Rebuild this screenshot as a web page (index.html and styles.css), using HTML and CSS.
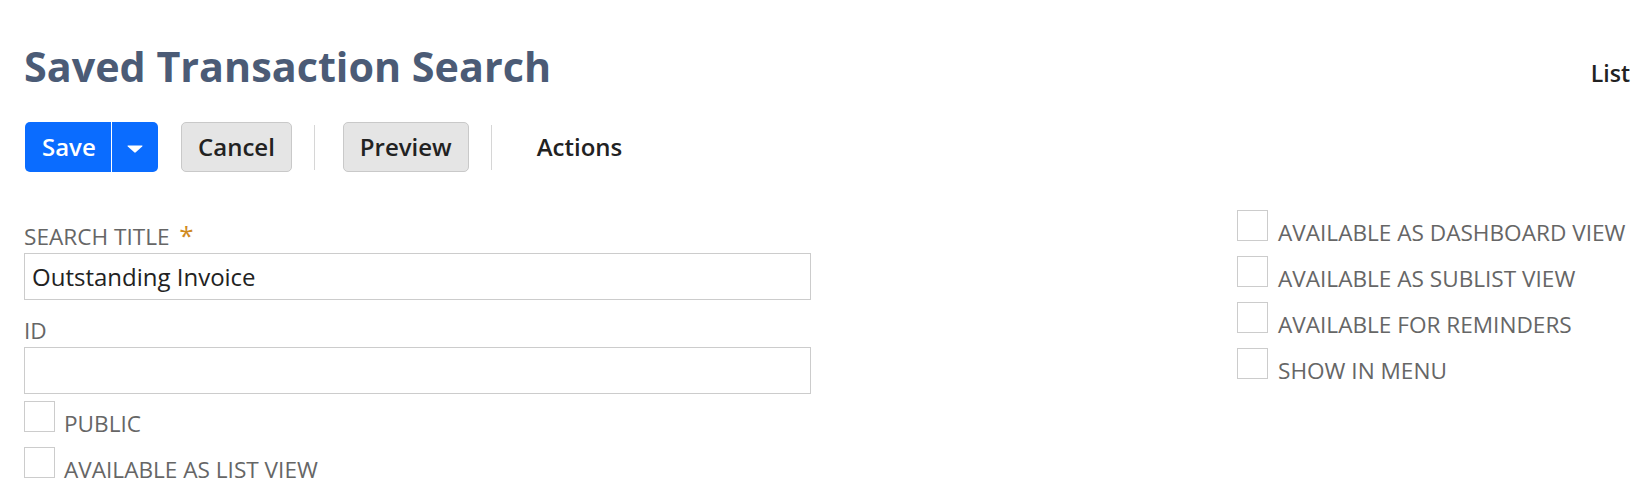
FILE: index.html
```html
<!DOCTYPE html>
<html lang="en">
<head>
<meta charset="utf-8">
<title>Saved Transaction Search</title>
<link rel="stylesheet" href="styles.css">
</head>
<body>
<div class="page">
  <header class="header">
    <h1 class="title">Saved Transaction Search</h1>
    <a class="list-link">List</a>
  </header>

  <div class="toolbar">
    <div class="split-btn">
      <button class="btn-primary">Save</button>
      <button class="btn-primary-menu" aria-label="More save options">
        <svg width="16" height="8" viewBox="0 0 16 8"><path d="M1 0.5 H15 Q16 0.5 15.2 1.4 L8.8 7.3 Q8 8 7.2 7.3 L0.8 1.4 Q0 0.5 1 0.5 Z" fill="#fff"/></svg>
      </button>
    </div>
    <button class="btn">Cancel</button>
    <span class="sep"></span>
    <button class="btn">Preview</button>
    <span class="sep"></span>
    <button class="btn-plain">Actions</button>
  </div>

  <div class="form">
    <div class="col-left">
      <label class="field-label">SEARCH TITLE <span class="req">*</span></label>
      <div class="input">Outstanding Invoice</div>
      <label class="field-label field-gap">ID</label>
      <div class="input"></div>
      <div class="checks checks-left">
        <div class="check"><span class="box"></span><span class="check-text">PUBLIC</span></div>
        <div class="check"><span class="box"></span><span class="check-text">AVAILABLE AS LIST VIEW</span></div>
      </div>
    </div>
    <div class="col-right">
      <div class="check"><span class="box"></span><span class="check-text">AVAILABLE AS DASHBOARD VIEW</span></div>
      <div class="check"><span class="box"></span><span class="check-text">AVAILABLE AS SUBLIST VIEW</span></div>
      <div class="check"><span class="box"></span><span class="check-text">AVAILABLE FOR REMINDERS</span></div>
      <div class="check"><span class="box"></span><span class="check-text">SHOW IN MENU</span></div>
    </div>
  </div>
</div>
</body>
</html>
```

FILE: styles.css
```css
html, body {
  margin: 0;
  padding: 0;
  background: #ffffff;
}

body {
  font-family: "Open Sans", "Liberation Sans", sans-serif;
  color: #222;
}

.page {
  padding: 38px 22px 0 24px;
}

.header {
  display: flex;
  align-items: baseline;
  justify-content: space-between;
  height: 56px;
}

.title {
  margin: 0;
  font-size: 41.3px;
  line-height: 56px;
  font-weight: 700;
  color: #4b5b76;
}

.list-link {
  font-size: 23px;
  font-weight: 600;
  color: #222;
}

.toolbar {
  display: flex;
  align-items: center;
  margin-top: 28px;
  margin-left: 1px;
  height: 50px;
}

.split-btn {
  display: flex;
  height: 50px;
  background: #0a6cff;
  border-radius: 5px;
  margin-right: 23px;
}

.btn-primary,
.btn-primary-menu,
.btn,
.btn-plain {
  font-family: "Open Sans", "Liberation Sans", sans-serif;
  font-size: 24px;
  font-weight: 600;
  line-height: 1;
  border: none;
  background: none;
  padding: 0;
  cursor: pointer;
}

.btn-primary {
  color: #fff;
  padding: 0 17px;
  width: 87px;
  border-right: 1px solid #fff;
}

.btn-primary-menu {
  width: 46px;
  display: flex;
  align-items: center;
  justify-content: center;
  padding-top: 3px;
}

.btn {
  height: 50px;
  padding: 0 16px;
  background: #e5e5e5;
  border: 1px solid #c9c9c9;
  border-radius: 5px;
  color: #222;
}

.btn-plain {
  height: 50px;
  padding: 0 17px;
  color: #222;
}

.sep {
  width: 1px;
  height: 45px;
  background: #d6d6d6;
  margin: 0 28px 0 22px;
}

.form {
  display: grid;
  grid-template-columns: 787px 1fr;
  column-gap: 426px;
  margin-top: 38px;
}

.col-left {
  padding-top: 13px;
}

.field-label {
  display: block;
  height: 26px;
  font-size: 22.6px;
  line-height: 28px;
  color: #666;
  margin-bottom: 4px;
  white-space: nowrap;
}

.field-gap {
  margin-top: 17px;
}

.req {
  color: #d08a1f;
  font-size: 26px;
  line-height: 0;
  margin-left: 4px;
}

.input {
  box-sizing: border-box;
  height: 47px;
  border: 1px solid #cccccc;
  padding: 0 7px;
  font-size: 24px;
  line-height: 46px;
  color: #222;
  overflow: hidden;
}

.checks-left {
  margin-top: 7px;
}

.check {
  display: flex;
  align-items: baseline;
  height: 31px;
  margin-bottom: 15px;
  white-space: nowrap;
}

.box {
  display: inline-block;
  flex: none;
  box-sizing: border-box;
  width: 31px;
  height: 31px;
  border: 1px solid #cccccc;
  background: #fff;
}

.check-text {
  font-size: 22.6px;
  line-height: 26px;
  color: #666;
  margin-left: 9px;
}

.col-right .check-text {
  margin-left: 10px;
}
```
